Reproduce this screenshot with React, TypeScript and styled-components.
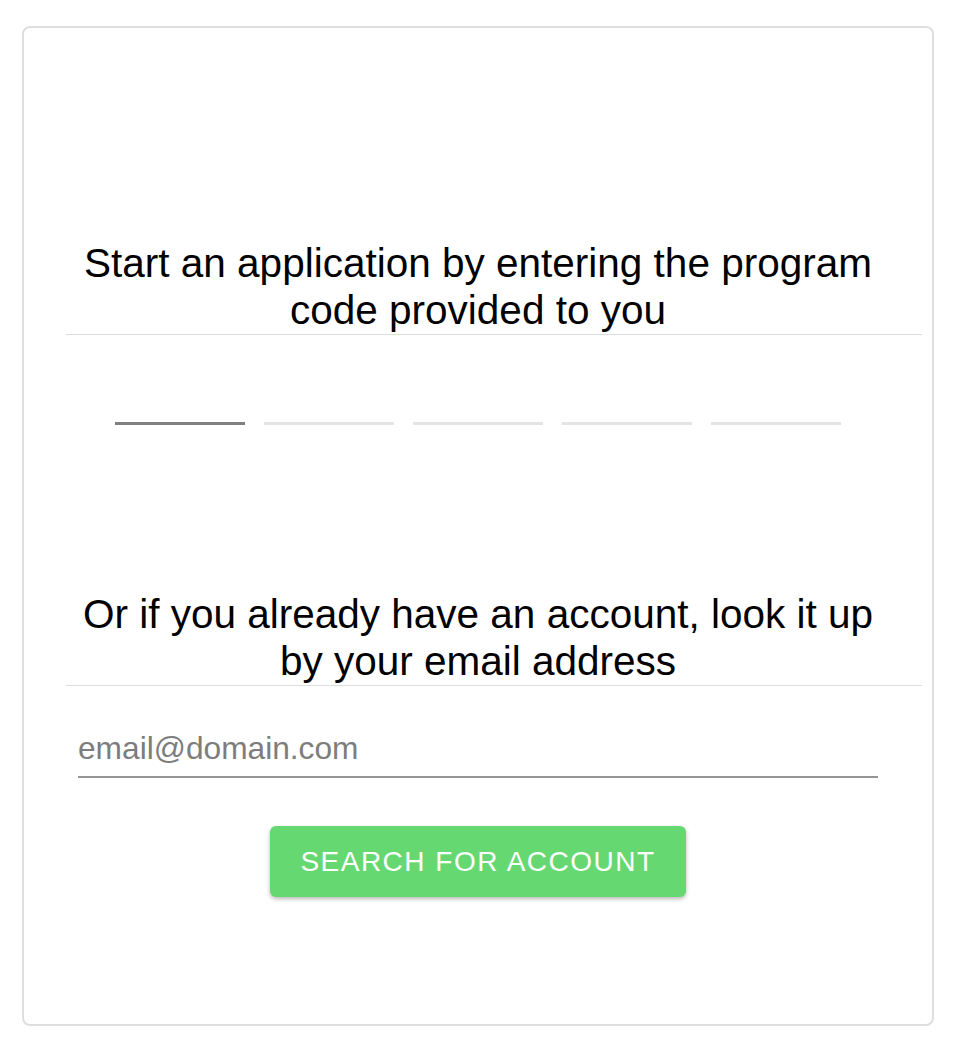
import React from "react";
import styled, { createGlobalStyle } from "styled-components";

const GlobalStyle = createGlobalStyle`
  html, body {
    margin: 0;
    padding: 0;
    background: #fff;
  }
  body {
    font-family: "Liberation Sans", Arial, Helvetica, sans-serif;
    color: #000;
  }
`;

function App() {
  const slots = [true, false, false, false, false];
  return (
    <>
      <GlobalStyle />
      <Page>
        <Card>
          <Heading $top={212}>
            Start an application by entering the program code provided to you
          </Heading>
          <Divider />
          <CodeRow>
            {slots.map((active, i) => (
              <CodeSlot key={i} $active={active} />
            ))}
          </CodeRow>
          <Heading $top={166}>
            Or if you already have an account, look it up by your email address
          </Heading>
          <Divider />
          <EmailInput type="email" placeholder="email@domain.com" />
          <SearchButton>Search for account</SearchButton>
        </Card>
      </Page>
    </>
  );
}

const Page = styled.div`
  padding: 26px 0 0 22px;
  width: 912px;
`;

const Card = styled.div`
  box-sizing: border-box;
  width: 912px;
  height: 1000px;
  border: 2px solid #dedede;
  border-radius: 8px;
  display: flex;
  flex-direction: column;
  align-items: stretch;
`;

const Heading = styled.h2<{ $top: number }>`
  margin: ${(p) => p.$top}px 0 0;
  padding: 0 40px;
  font-size: 40.5px;
  font-weight: 400;
  line-height: 47px;
  text-align: center;
  color: #000;
`;

const Divider = styled.hr`
  border: 0;
  height: 1px;
  background: #dddddd;
  margin: 0 10px 0 42px;
`;

const CodeRow = styled.div`
  display: flex;
  justify-content: center;
  gap: 19px;
  margin-top: 87px;
`;

const CodeSlot = styled.span<{ $active: boolean }>`
  display: block;
  width: 130px;
  height: 3px;
  background: ${(p) => (p.$active ? "#808080" : "#e4e4e4")};
`;

const EmailInput = styled.input`
  box-sizing: border-box;
  align-self: center;
  width: 800px;
  margin-top: 44px;
  padding: 0 0 10px 0;
  border: 0;
  border-bottom: 2px solid #959595;
  outline: none;
  font-family: "Liberation Sans", Arial, sans-serif;
  font-size: 31.7px;
  line-height: 36px;
  color: #333;
  background: transparent;
  &::placeholder {
    color: #7d7d7d;
  }
`;

const SearchButton = styled.button`
  align-self: center;
  width: 416px;
  height: 71px;
  margin-top: 48px;
  border: 0;
  border-radius: 6px;
  background: #66d872;
  box-shadow: 0 2px 4px rgba(0, 0, 0, 0.28);
  color: #fff;
  font-family: "Liberation Sans", Arial, sans-serif;
  font-size: 28px;
  font-weight: 400;
  letter-spacing: 1.5px;
  text-transform: uppercase;
  cursor: pointer;
`;

export default App;
